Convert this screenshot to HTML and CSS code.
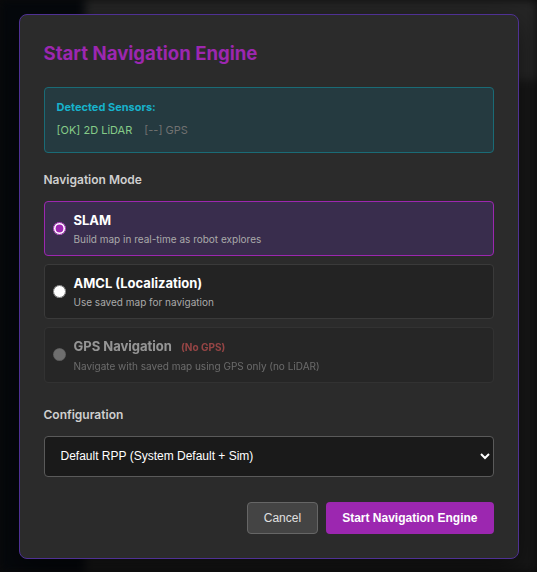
FILE: index.html
```html
<!DOCTYPE html>
<html lang="en">
<head>
<meta charset="utf-8">
<title>Start Navigation Engine</title>
<link rel="stylesheet" href="styles.css">
</head>
<body>
<div class="backdrop" aria-hidden="true">
  <div class="bg-sidebar"></div>
  <div class="bg-main">
    <div class="bg-header"></div>
    <div class="bg-body"></div>
  </div>
</div>
<div class="overlay">
  <div class="modal">
    <h2 class="title">Start Navigation Engine</h2>

    <div class="sensors">
      <div class="sensors-title">Detected Sensors:</div>
      <div class="sensors-list">
        <span class="sensor ok">[OK] 2D LiDAR</span>
        <span class="sensor missing">[--] GPS</span>
      </div>
    </div>

    <div class="section-label">Navigation Mode</div>
    <div class="options">
      <label class="option selected">
        <input type="radio" name="mode" checked>
        <span class="option-text">
          <span class="option-title">SLAM</span>
          <span class="option-desc">Build map in real-time as robot explores</span>
        </span>
      </label>
      <label class="option">
        <input type="radio" name="mode">
        <span class="option-text">
          <span class="option-title">AMCL (Localization)</span>
          <span class="option-desc">Use saved map for navigation</span>
        </span>
      </label>
      <label class="option disabled">
        <input type="radio" name="mode" disabled>
        <span class="option-text">
          <span class="option-title">GPS Navigation <span class="warn">(No GPS)</span></span>
          <span class="option-desc">Navigate with saved map using GPS only (no LiDAR)</span>
        </span>
      </label>
    </div>

    <div class="section-label config-label">Configuration</div>
    <select class="select">
      <option>Default RPP (System Default + Sim)</option>
    </select>

    <div class="actions">
      <button class="btn btn-cancel">Cancel</button>
      <button class="btn btn-primary">Start Navigation Engine</button>
    </div>
  </div>
</div>
</body>
</html>
```
FILE: styles.css
```css
* { box-sizing: border-box; }
html, body { margin: 0; padding: 0; }
body {
  width: 537px;
  height: 572px;
  overflow: hidden;
  background: #0c0c0c;
  font-family: Inter, "Noto Sans", sans-serif;
  position: relative;
}
.backdrop {
  position: absolute;
  inset: 0;
  display: flex;
  filter: blur(5px);
}
.bg-sidebar { width: 85px; background: #05080c; }
.bg-main { flex: 1; display: flex; flex-direction: column; }
.bg-header { height: 80px; background: #262626; }
.bg-body { flex: 1; background: #171717; }

.overlay {
  position: absolute;
  inset: 0;
  display: flex;
  align-items: center;
  justify-content: center;
}
.modal {
  width: 500px;
  background: #2b2b2b;
  border: 1px solid #4f3194;
  border-radius: 8px;
  padding: 24px;
  box-shadow: 0 10px 30px rgba(0,0,0,0.5);
}
.title {
  margin: 0 0 22px;
  padding-top: 3px;
  font-size: 18.6px;
  line-height: 23px;
  font-weight: 700;
  color: #9c27b0;
}
.sensors {
  background: #253a40;
  border: 1px solid #1a6b76;
  border-radius: 4px;
  padding: 11px 12px 13px;
}
.sensors-title {
  font-size: 11px;
  line-height: 16px;
  font-weight: 700;
  color: #17b2cc;
  margin-bottom: 7px;
}
.sensors-list {
  display: flex;
  gap: 12px;
  font-size: 11px;
  line-height: 17px;
}
.ok { color: #85cb88; }
.missing { color: #717171; }

.section-label {
  margin-top: 19px;
  margin-bottom: 13px;
  font-size: 12px;
  line-height: 16px;
  font-weight: 600;
  color: #cfcfcf;
}
.config-label { margin-top: 24px; }

.options {
  display: flex;
  flex-direction: column;
  gap: 8px;
}
.option {
  display: flex;
  align-items: center;
  gap: 8px;
  padding: 10px 12px 10px 8px;
  background: #232323;
  border: 1px solid #3a3a3a;
  border-radius: 4px;
}
.option input {
  margin: 0;
  width: 13px;
  height: 13px;
  accent-color: #9c27b0;
  flex: none;
}
.option.selected {
  background: #392d4d;
  border-color: #9c27b0;
}
.option.disabled {
  opacity: 0.5;
}
.option-text { display: flex; flex-direction: column; }
.option-title {
  font-size: 13px;
  line-height: 16px;
  font-weight: 700;
  color: #ffffff;
}
.option-desc {
  margin-top: 5px;
  font-size: 10px;
  line-height: 12px;
  color: #aaaaaa;
}
.warn {
  margin-left: 6px;
  font-size: 10px;
  font-weight: 700;
  color: #ff5e5e;
}

.select {
  display: block;
  width: 100%;
  height: 41px;
  padding: 0 8px 0 12px;
  background: #1a1a1a;
  border: 1px solid #5a5a5a;
  border-radius: 4px;
  color: #ffffff;
  font-family: "Liberation Sans", Arial, sans-serif;
  font-size: 12px;
  color-scheme: dark;
}

.actions {
  margin-top: 25px;
  display: flex;
  justify-content: flex-end;
  gap: 8px;
}
.btn {
  height: 32px;
  padding: 0 16px;
  border-radius: 4px;
  font-family: "Liberation Sans", Arial, sans-serif;
  font-size: 12px;
}
.btn-cancel {
  background: #444444;
  border: 1px solid #666666;
  color: #e0e0e0;
}
.btn-primary {
  background: #9c27b0;
  border: none;
  color: #ffffff;
  font-weight: 700;
}
```
